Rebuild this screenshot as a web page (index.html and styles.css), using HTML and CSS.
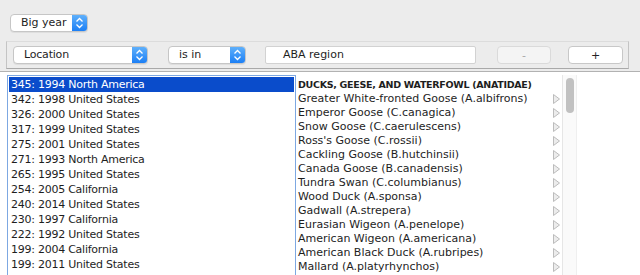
FILE: index.html
```html
<!DOCTYPE html>
<html lang="en">
<head>
    <meta charset="UTF-8">
    <title>Big year</title>
    <link rel="stylesheet" href="styles.css">
</head>
<body>
    <div class="toolbar">
        <div class="combo combo-year">
            <span class="combo-label">Big year</span>
            <span class="combo-arrow"><svg width="9" height="12" viewBox="0 0 9 12"><path d="M1.5 4.5 L4.5 1.5 L7.5 4.5 M1.5 7.5 L4.5 10.5 L7.5 7.5" fill="none" stroke="#fff" stroke-width="1.3"/></svg></span>
        </div>
    </div>

    <div class="filter-panel">
        <div class="combo combo-field">
            <span class="combo-label">Location</span>
            <span class="combo-arrow"><svg width="9" height="12" viewBox="0 0 9 12"><path d="M1.5 4.5 L4.5 1.5 L7.5 4.5 M1.5 7.5 L4.5 10.5 L7.5 7.5" fill="none" stroke="#fff" stroke-width="1.3"/></svg></span>
        </div>
        <div class="combo combo-op">
            <span class="combo-label">is in</span>
            <span class="combo-arrow"><svg width="9" height="12" viewBox="0 0 9 12"><path d="M1.5 4.5 L4.5 1.5 L7.5 4.5 M1.5 7.5 L4.5 10.5 L7.5 7.5" fill="none" stroke="#fff" stroke-width="1.3"/></svg></span>
        </div>
        <div class="text-field">ABA region</div>
        <button class="btn btn-minus" disabled>-</button>
        <button class="btn btn-plus">+</button>
    </div>

    <div class="content">
        <ul class="year-list">
            <li class="selected">345: 1994 North America</li>
            <li>342: 1998 United States</li>
            <li>326: 2000 United States</li>
            <li>317: 1999 United States</li>
            <li>275: 2001 United States</li>
            <li>271: 1993 North America</li>
            <li>265: 1995 United States</li>
            <li>254: 2005 California</li>
            <li>240: 2014 United States</li>
            <li>230: 1997 California</li>
            <li>222: 1992 United States</li>
            <li>199: 2004 California</li>
            <li>199: 2011 United States</li>
        </ul>

        <ul class="species-list">
            <li class="family">DUCKS, GEESE, AND WATERFOWL (ANATIDAE)</li>
            <li>Greater White-fronted Goose (A.albifrons)<svg class="tri" width="7" height="10" viewBox="0 0 7 10"><path d="M0.5 0.5 L6.5 5 L0.5 9.5 Z" fill="#ececec" stroke="#bcbcbc"/></svg></li>
            <li>Emperor Goose (C.canagica)<svg class="tri" width="7" height="10" viewBox="0 0 7 10"><path d="M0.5 0.5 L6.5 5 L0.5 9.5 Z" fill="#ececec" stroke="#bcbcbc"/></svg></li>
            <li>Snow Goose (C.caerulescens)<svg class="tri" width="7" height="10" viewBox="0 0 7 10"><path d="M0.5 0.5 L6.5 5 L0.5 9.5 Z" fill="#ececec" stroke="#bcbcbc"/></svg></li>
            <li>Ross's Goose (C.rossii)<svg class="tri" width="7" height="10" viewBox="0 0 7 10"><path d="M0.5 0.5 L6.5 5 L0.5 9.5 Z" fill="#ececec" stroke="#bcbcbc"/></svg></li>
            <li>Cackling Goose (B.hutchinsii)<svg class="tri" width="7" height="10" viewBox="0 0 7 10"><path d="M0.5 0.5 L6.5 5 L0.5 9.5 Z" fill="#ececec" stroke="#bcbcbc"/></svg></li>
            <li>Canada Goose (B.canadensis)<svg class="tri" width="7" height="10" viewBox="0 0 7 10"><path d="M0.5 0.5 L6.5 5 L0.5 9.5 Z" fill="#ececec" stroke="#bcbcbc"/></svg></li>
            <li>Tundra Swan (C.columbianus)<svg class="tri" width="7" height="10" viewBox="0 0 7 10"><path d="M0.5 0.5 L6.5 5 L0.5 9.5 Z" fill="#ececec" stroke="#bcbcbc"/></svg></li>
            <li>Wood Duck (A.sponsa)<svg class="tri" width="7" height="10" viewBox="0 0 7 10"><path d="M0.5 0.5 L6.5 5 L0.5 9.5 Z" fill="#ececec" stroke="#bcbcbc"/></svg></li>
            <li>Gadwall (A.strepera)<svg class="tri" width="7" height="10" viewBox="0 0 7 10"><path d="M0.5 0.5 L6.5 5 L0.5 9.5 Z" fill="#ececec" stroke="#bcbcbc"/></svg></li>
            <li>Eurasian Wigeon (A.penelope)<svg class="tri" width="7" height="10" viewBox="0 0 7 10"><path d="M0.5 0.5 L6.5 5 L0.5 9.5 Z" fill="#ececec" stroke="#bcbcbc"/></svg></li>
            <li>American Wigeon (A.americana)<svg class="tri" width="7" height="10" viewBox="0 0 7 10"><path d="M0.5 0.5 L6.5 5 L0.5 9.5 Z" fill="#ececec" stroke="#bcbcbc"/></svg></li>
            <li>American Black Duck (A.rubripes)<svg class="tri" width="7" height="10" viewBox="0 0 7 10"><path d="M0.5 0.5 L6.5 5 L0.5 9.5 Z" fill="#ececec" stroke="#bcbcbc"/></svg></li>
            <li>Mallard (A.platyrhynchos)<svg class="tri" width="7" height="10" viewBox="0 0 7 10"><path d="M0.5 0.5 L6.5 5 L0.5 9.5 Z" fill="#ececec" stroke="#bcbcbc"/></svg></li>
        </ul>

        <div class="scrollbar">
            <div class="thumb"></div>
        </div>
    </div>
</body>
</html>
```

FILE: styles.css
```css
body {
    margin: 0;
    background: #ececec;
    font-family: "DejaVu Sans", sans-serif;
    font-size: 11px;
    color: #1e1e1e;
    overflow: hidden;
}

/* barre du haut */
.toolbar {
    padding: 14px 0 0 10px;
    height: 27px;
}

.combo {
    display: flex;
    height: 16px;
    background: #fff;
    border: 1px solid #c6c6c6;
    border-radius: 4px;
    box-shadow: 0 1px 0 rgba(0, 0, 0, 0.06);
    overflow: hidden;
}
.combo-label {
    flex: 1;
    padding-left: 10px;
    line-height: 16px;
}
.combo-arrow {
    width: 15px;
    display: flex;
    align-items: center;
    justify-content: center;
    background: linear-gradient(#5fb0fb, #1c7ff5);
}
.combo-year {
    width: 76px;
}

/* panneau de filtre */
.filter-panel {
    display: flex;
    align-items: center;
    margin: 0 11px 0 6px;
    height: 26px;
    padding: 0 0 0 6px;
    border: 1px solid #c4c4c4;
    border-top-color: #dcdcdc;
    border-bottom-color: #a9a9a9;
}
.combo-field {
    width: 133px;
}
.combo-field .combo-label {
    padding-left: 10px;
    letter-spacing: -0.2px;
}
.combo-op {
    width: 76px;
    margin-left: 20px;
}
.text-field {
    width: 192px;
    height: 16px;
    line-height: 16px;
    margin-left: 19px;
    padding-left: 17px;
    background: #fff;
    border: 1px solid #d2d2d2;
    border-radius: 2px;
}
.btn {
    height: 18px;
    font-family: "DejaVu Sans", sans-serif;
    font-size: 11px;
    background: #fff;
    border: 1px solid #c8c8c8;
    border-radius: 4px;
    padding: 0;
    color: #222;
}
.btn-minus {
    width: 54px;
    margin-left: 21px;
    background: #f4f4f4;
    border-color: #dadada;
    color: #a8a8a8;
}
.btn-plus {
    width: 55px;
    margin-left: 17px;
}

/* listes */
.content {
    display: flex;
    margin-top: 2px;
    border-top: 1px solid #b2b2b2;
    background: #fff;
    height: 210px;
    padding-top: 3px;
}
.content ul {
    list-style: none;
    margin: 0;
    padding: 0;
}
.content li {
    white-space: nowrap;
}
.content .year-list {
    box-sizing: border-box;
    width: 289px;
    margin-left: 7px;
    padding: 1px 1px 0 1px;
    border: 1px solid #7da8e2;
    border-bottom: none;
}
.year-list li {
    height: 15px;
    line-height: 16px;
    padding-left: 2px;
    letter-spacing: -0.25px;
}
.year-list .selected {
    background: #0a4ccb;
    color: #fff;
}
.content .species-list {
    box-sizing: border-box;
    width: 266px;
    padding: 3px 0 0 2px;
}
.species-list li {
    display: flex;
    justify-content: space-between;
    align-items: center;
    height: 14px;
    line-height: 14px;
}
.species-list .family {
    font-weight: bold;
    font-size: 9.5px;
    letter-spacing: -0.3px;
}
.tri {
    margin-right: 2px;
}
.scrollbar {
    width: 13px;
    background: #fafafa;
    border-left: 1px solid #e6e6e6;
    border-right: 1px solid #efefef;
}
.thumb {
    width: 8px;
    height: 35px;
    margin: 3px 0 0 3px;
    border-radius: 4px;
    background: #c1c1c1;
}
```
